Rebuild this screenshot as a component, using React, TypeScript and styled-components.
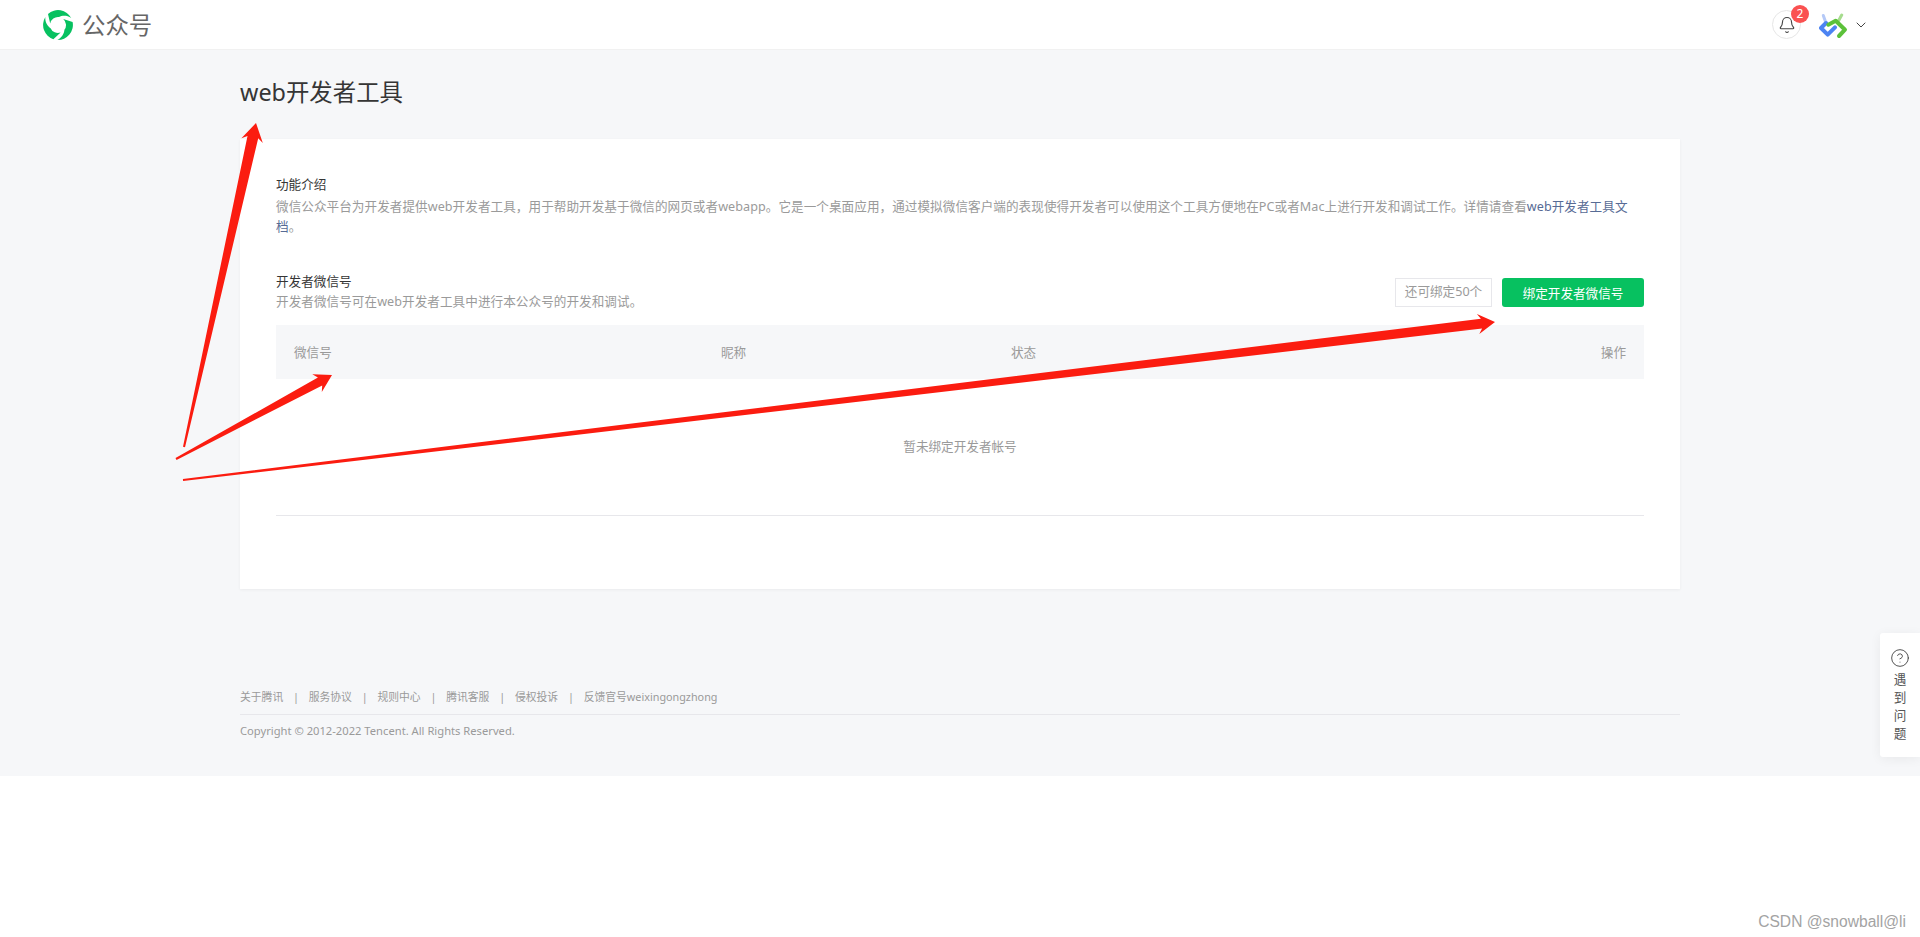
import React from "react"
import styled, { createGlobalStyle } from "styled-components"
import { Bell, ChevronDown, CircleHelp } from "lucide-react"

const GlobalStyle = createGlobalStyle`
    html,
    body {
        margin: 0;
        padding: 0;
        background: #fff;
    }

    body {
        font-family: "Noto Sans", "Noto Sans CJK SC", sans-serif;
        font-size: 12.6px;
        color: #353535;
    }
`

const Page = styled.div`
    position: relative;
    height: 937px;
    overflow: hidden;
    background: #fff;
`

const Header = styled.header`
    height: 50px;
    box-sizing: border-box;
    padding: 0 51px 0 43px;
    display: flex;
    align-items: center;
    justify-content: space-between;
    background: #fff;
    border-bottom: 1px solid #f1f1f1;
`

const Brand = styled.div`
    display: flex;
    align-items: center;
    gap: 9px;
    font-size: 23.4px;
    line-height: 30px;
    color: #666;
`

const UserArea = styled.div`
    display: flex;
    align-items: center;
`

const BellButton = styled.div`
    position: relative;
    width: 29px;
    height: 29px;
    box-sizing: border-box;
    display: flex;
    align-items: center;
    justify-content: center;
    border: 1px solid #e6e6e6;
    border-radius: 50%;
    color: #444;
`

const Badge = styled.span`
    position: absolute;
    top: -6px;
    right: -9px;
    width: 18px;
    height: 18px;
    border-radius: 50%;
    background: #fa5151;
    color: #fff;
    font-size: 12px;
    line-height: 18px;
    text-align: center;
`

const Avatar = styled.svg`
    margin: 6px 4px 0 18px;
`

const Main = styled.main`
    height: 726px;
    box-sizing: border-box;
    padding: 0 240px;
    background: #f6f7f9;
`

const Title = styled.h1`
    margin: 0;
    padding-top: 24px;
    height: 89px;
    box-sizing: border-box;
    font-size: 23.4px;
    line-height: 36px;
    font-weight: 400;
    color: #353535;
`

const Card = styled.section`
    height: 450px;
    box-sizing: border-box;
    padding: 36px;
    background: #fff;
    box-shadow: 0 1px 3px rgba(0, 0, 0, 0.05);
`

const Heading = styled.h2`
    margin: 0;
    font-size: 12.6px;
    line-height: 20px;
    font-weight: 400;
    color: #353535;
`

const Description = styled.p<{ $flush?: boolean }>`
    margin: ${props => (props.$flush ? "0" : "2px 0 0")};
    font-size: 12.6px;
    line-height: 20px;
    letter-spacing: 0.05px;
    color: #9a9a9a;
`

const DocLink = styled.a`
    color: #576b95;
`

const SectionHead = styled.div`
    margin-top: 35px;
    display: flex;
    align-items: flex-start;
    justify-content: space-between;
`

const Actions = styled.div`
    margin-top: 6px;
    display: flex;
    gap: 10px;
`

const Quota = styled.span`
    width: 97px;
    height: 29px;
    box-sizing: border-box;
    border: 1px solid #e7e7eb;
    font-size: 12.6px;
    line-height: 26px;
    text-align: center;
    color: #9a9a9a;
`

const BindButton = styled.button`
    width: 142px;
    height: 29px;
    padding: 0;
    border: 0;
    border-radius: 3px;
    background: #07c160;
    color: #fff;
    font: inherit;
    font-size: 12.6px;
`

const TableRow = styled.div`
    margin-top: 13px;
    height: 54px;
    box-sizing: border-box;
    padding: 0 18px 2px;
    display: grid;
    grid-template-columns: 427px 290px 1fr auto;
    align-items: center;
    background: #f6f7f9;
    color: #9a9a9a;
`

const EmptyRow = styled.div`
    height: 137px;
    box-sizing: border-box;
    padding-bottom: 3px;
    display: flex;
    align-items: center;
    justify-content: center;
    border-bottom: 1px solid #e7e7eb;
    color: #9a9a9a;
`

const Footer = styled.footer`
    margin-top: 98px;
    color: #9a9a9a;
`

const FooterLinks = styled.nav`
    display: flex;
    align-items: center;
    height: 18px;
    padding-bottom: 9px;
    border-bottom: 1px solid #e7e7eb;
    font-size: 10.8px;
`

const FooterLink = styled.a`
    & + &::before {
        content: "|";
        margin: 0 9.8px;
    }
`

const Copyright = styled.div`
    margin-top: 7px;
    font-size: 11.2px;
    line-height: 18px;
`

const HelpPanel = styled.aside`
    position: absolute;
    top: 633px;
    right: 0;
    width: 40px;
    height: 124px;
    box-sizing: border-box;
    padding-top: 15px;
    display: flex;
    flex-direction: column;
    align-items: center;
    background: #fff;
    border-radius: 3px 0 0 3px;
    box-shadow: 0 2px 12px rgba(0, 0, 0, 0.06);
    color: #555;
`

const HelpText = styled.div`
    width: 14px;
    margin-top: 3px;
    font-size: 12.6px;
    line-height: 18px;
    text-align: center;
`

const Annotation = styled.svg`
    position: absolute;
    top: 0;
    left: 0;
    pointer-events: none;
`

const Watermark = styled.div`
    position: absolute;
    right: 14px;
    bottom: 5px;
    font-family: "Liberation Sans", sans-serif;
    font-size: 15.6px;
    line-height: 20px;
    color: #a3a3a3;
`

type Point = [number, number]

// hand drawn style arrow: thin at the tail, widening towards the head
const arrowPoints = (tail: Point, tip: Point, shaft: number, headW: number, headL: number) => {
    const len = Math.hypot(tip[0] - tail[0], tip[1] - tail[1])
    const ux = (tip[0] - tail[0]) / len
    const uy = (tip[1] - tail[1]) / len
    const at = (along: number, side: number): Point => [
        tip[0] - ux * along - uy * side,
        tip[1] - uy * along + ux * side,
    ]
    const pts = [
        at(len, 1),
        at(headL * 0.8, shaft / 2),
        at(headL, headW / 2),
        tip,
        at(headL, -headW / 2),
        at(headL * 0.8, -shaft / 2),
        at(len, -1),
    ]
    return pts.map(p => `${p[0].toFixed(1)},${p[1].toFixed(1)}`).join(" ")
}

const ARROWS: { tail: Point; tip: Point; shaft: number; headW: number; headL: number }[] = [
    { tail: [184, 447], tip: [256, 123], shaft: 11, headW: 22, headL: 18 },
    { tail: [176, 459], tip: [332, 375], shaft: 9, headW: 20, headL: 17 },
    { tail: [183, 480], tip: [1495, 322], shaft: 10, headW: 20, headL: 17 },
]

const FOOTER_LINKS = ["关于腾讯", "服务协议", "规则中心", "腾讯客服", "侵权投诉", "反馈官号weixingongzhong"]

const LogoIcon = () => (
    <svg width="30" height="30" viewBox="0 0 30 30">
        {[0, 120, 240].map(angle => (
            <path
                key={angle}
                transform={`rotate(${angle} 15 15)`}
                fill="#07c160"
                d="M5 3.9 A15 15 0 0 1 28.2 8 C24 5 19 5.5 16 7 A8 8 0 0 0 7.2 13.5 Z"
            />
        ))}
    </svg>
)

const AvatarIcon = () => (
    <Avatar width="30" height="30" viewBox="0 0 30 30" fill="none" strokeLinecap="round" strokeLinejoin="round">
        <path d="M4.3 2.5 L7 10" stroke="#b5c9f7" strokeWidth="3" />
        <path d="M22.7 2 L19.3 8.3" stroke="#a6dc8e" strokeWidth="3" />
        <path d="M7 10 L2 15 L8.7 21.7 L16 14.3" stroke="#4d84f2" strokeWidth="4" />
        <path d="M9.3 11.7 L16.7 7.7 L26 16.7 L20 23" stroke="#5cc13a" strokeWidth="4" />
    </Avatar>
)

const App = () => {
    return (
        <Page>
            <GlobalStyle />
            <Header>
                <Brand>
                    <LogoIcon />
                    <span>公众号</span>
                </Brand>
                <UserArea>
                    <BellButton>
                        <Bell size={18} strokeWidth={1.5} />
                        <Badge>2</Badge>
                    </BellButton>
                    <AvatarIcon />
                    <ChevronDown size={16} strokeWidth={1.5} color="#444" />
                </UserArea>
            </Header>
            <Main>
                <Title>web开发者工具</Title>
                <Card>
                    <Heading>功能介绍</Heading>
                    <Description>
                        微信公众平台为开发者提供web开发者工具，用于帮助开发基于微信的网页或者webapp。它是一个桌面应用，通过模拟微信客户端的表现使得开发者可以使用这个工具方便地在PC或者Mac上进行开发和调试工作。详情请查看
                        <DocLink>web开发者工具文档</DocLink>。
                    </Description>
                    <SectionHead>
                        <div>
                            <Heading>开发者微信号</Heading>
                            <Description $flush>开发者微信号可在web开发者工具中进行本公众号的开发和调试。</Description>
                        </div>
                        <Actions>
                            <Quota>还可绑定50个</Quota>
                            <BindButton>绑定开发者微信号</BindButton>
                        </Actions>
                    </SectionHead>
                    <TableRow>
                        <span>微信号</span>
                        <span>昵称</span>
                        <span>状态</span>
                        <span>操作</span>
                    </TableRow>
                    <EmptyRow>暂未绑定开发者帐号</EmptyRow>
                </Card>
                <Footer>
                    <FooterLinks>
                        {FOOTER_LINKS.map(link => (
                            <FooterLink key={link}>{link}</FooterLink>
                        ))}
                    </FooterLinks>
                    <Copyright>Copyright © 2012-2022 Tencent. All Rights Reserved.</Copyright>
                </Footer>
            </Main>
            <HelpPanel>
                <CircleHelp size={20} strokeWidth={1} color="#333" />
                <HelpText>遇到问题</HelpText>
            </HelpPanel>
            <Annotation width="1920" height="937">
                {ARROWS.map(a => (
                    <polygon
                        key={a.tip.join()}
                        fill="#fb1c10"
                        points={arrowPoints(a.tail, a.tip, a.shaft, a.headW, a.headL)}
                    />
                ))}
            </Annotation>
            <Watermark>CSDN @snowball@li</Watermark>
        </Page>
    )
}

export default App
